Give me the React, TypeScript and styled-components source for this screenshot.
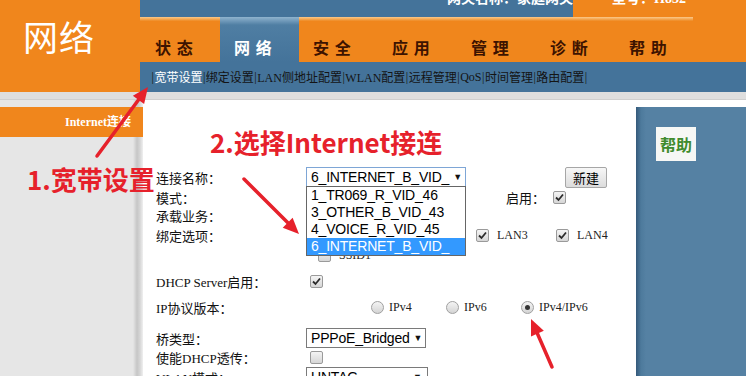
import React from 'react';
import styled, { createGlobalStyle } from 'styled-components';

const ORANGE = '#f0861c';
const BLUE = '#44739a';
const RED = '#e6212b';

const GlobalStyle = createGlobalStyle`
  html, body { margin: 0; padding: 0; }
  body {
    width: 746px;
    height: 376px;
    overflow: hidden;
    background: #fff;
    font-family: "Liberation Serif", "Noto Sans CJK SC", serif;
    font-size: 13px;
    color: #111;
  }
`;

const tabs = ['状 态', '网 络', '安 全', '应 用', '管 理', '诊 断', '帮 助'];
const subItems = ['宽带设置', '绑定设置', 'LAN侧地址配置', 'WLAN配置', '远程管理', 'QoS', '时间管理', '路由配置'];
const options = ['1_TR069_R_VID_46', '3_OTHER_B_VID_43', '4_VOICE_R_VID_45', '6_INTERNET_B_VID_'];

const Arrow = ({ x1, y1, x2, y2 }: { x1: number; y1: number; x2: number; y2: number }) => {
  const dx = x2 - x1;
  const dy = y2 - y1;
  const len = Math.hypot(dx, dy);
  const ux = dx / len;
  const uy = dy / len;
  const hl = 16;
  const hw = 7;
  const bx = x2 - ux * hl;
  const by = y2 - uy * hl;
  const pts = `${x2},${y2} ${bx - uy * hw},${by + ux * hw} ${bx + uy * hw},${by - ux * hw}`;
  return (
    <g>
      <line x1={x1} y1={y1} x2={bx + ux * 2} y2={by + uy * 2} stroke={RED} strokeWidth={3.5} strokeLinecap="round" />
      <polygon points={pts} fill={RED} />
    </g>
  );
};

const Check = ({ checked }: { checked?: boolean }) => (
  <CheckBox>
    {checked && (
      <svg width="9" height="9" viewBox="0 0 9 9">
        <path d="M1 4.5 L3.5 7 L8 1.5" fill="none" stroke="#2b2b2b" strokeWidth="1.8" />
      </svg>
    )}
  </CheckBox>
);

export default function App() {
  return (
    <Page>
      <GlobalStyle />
      <Header>
        <Logo>网络</Logo>
        <HeaderRight>
          <InfoBar>
            <InfoLeft>
              <InfoText>网关名称：家庭网关</InfoText>
            </InfoLeft>
            <InfoRight>
              <InfoText>型号：H832</InfoText>
            </InfoRight>
          </InfoBar>
          <Nav>
            {tabs.map((t, i) => (
              <Tab key={t} $active={i === 1}>
                {t}
              </Tab>
            ))}
          </Nav>
          <SubNav>
            <Sep>|</Sep>
            {subItems.map((s, i) => (
              <React.Fragment key={s}>
                <SubItem $active={i === 0}>{s}</SubItem>
                <Sep>|</Sep>
              </React.Fragment>
            ))}
          </SubNav>
        </HeaderRight>
      </Header>
      <Strip />
      <Main>
        <Sidebar>
          <SideItem>Internet连接</SideItem>
        </Sidebar>
        <Content>
          <Row $h={22}>
            <Label>连接名称：</Label>
            <SelectWrap $w={160} $focus>
              <SelectText>6_INTERNET_B_VID_</SelectText>
              <Caret>▼</Caret>
              <DropList>
                {options.map((o, i) => (
                  <DropItem key={o} $sel={i === 3}>
                    {o}
                  </DropItem>
                ))}
              </DropList>
            </SelectWrap>
            <Button>新建</Button>
          </Row>
          <Row $h={18}>
            <Label>模式：</Label>
            <Field $pl={200}>
              <InlineLabel>启用：</InlineLabel>
              <Check checked />
            </Field>
          </Row>
          <Row $h={18}>
            <Label>承载业务：</Label>
          </Row>
          <Row $h={22}>
            <Label>绑定选项：</Label>
            <Field $pl={10}>
              {['LAN1', 'LAN2', 'LAN3', 'LAN4'].map((l) => (
                <CheckItem key={l} $w={80}>
                  <Check checked />
                  <Small>{l}</Small>
                </CheckItem>
              ))}
            </Field>
          </Row>
          <Row $h={18}>
            <Label />
            <Field $pl={12}>
              <CheckItem $w={80}>
                <Check />
                <Small>SSID1</Small>
              </CheckItem>
            </Field>
          </Row>
          <Row $h={18} $mt={8}>
            <Label>DHCP Server启用：</Label>
            <Field $pl={4}>
              <Check checked />
            </Field>
          </Row>
          <Row $h={18} $mt={8}>
            <Label>IP协议版本：</Label>
            <Field $pl={65}>
              {['IPv4', 'IPv6', 'IPv4/IPv6'].map((r, i) => (
                <CheckItem key={r} $w={75} $gap={5}>
                  <Radio $on={i === 2} />
                  <Small>{r}</Small>
                </CheckItem>
              ))}
            </Field>
          </Row>
          <Row $h={20} $mt={12}>
            <Label>桥类型：</Label>
            <SelectWrap $w={120}>
              <SelectText>PPPoE_Bridged</SelectText>
              <Caret>▼</Caret>
            </SelectWrap>
          </Row>
          <Row $h={18}>
            <Label>使能DHCP透传：</Label>
            <Field $pl={4}>
              <Check />
            </Field>
          </Row>
          <Row $h={20} $mt={1}>
            <Label>VLAN模式：</Label>
            <SelectWrap $w={122}>
              <SelectText>UNTAG</SelectText>
              <Caret>▼</Caret>
            </SelectWrap>
          </Row>
        </Content>
        <Help>
          <HelpTitle>帮助</HelpTitle>
        </Help>
      </Main>
      <Overlay>
        <AnnoText $x={27} $y={161}>1.宽带设置</AnnoText>
        <AnnoText $x={210} $y={124}>2.选择Internet接连</AnnoText>
        <svg width="746" height="376" viewBox="0 0 746 376">
          <Arrow x1={97} y1={156} x2={148} y2={87} />
          <Arrow x1={244} y1={179} x2={299} y2={234} />
          <Arrow x1={552} y1={367} x2={531} y2={319} />
        </svg>
      </Overlay>
    </Page>
  );
}

const Page = styled.div`
  position: relative;
  width: 746px;
  height: 376px;
  overflow: hidden;
`;

const Header = styled.div`
  display: flex;
  height: 92px;
`;

const Logo = styled.div`
  width: 140px;
  background: ${ORANGE};
  color: #fff;
  font-family: "Noto Sans CJK SC", sans-serif;
  font-size: 35px;
  line-height: 1;
  padding: 18px 0 0 23px;
  box-sizing: border-box;
  letter-spacing: 1px;
`;

const HeaderRight = styled.div`
  flex: 1;
  display: flex;
  flex-direction: column;
`;

const InfoBar = styled.div`
  display: flex;
  height: 17px;
  overflow: hidden;
`;

const InfoLeft = styled.div`
  flex: 1;
  background: ${BLUE};
  text-align: right;
`;

const InfoRight = styled.div`
  width: 173px;
  background: ${ORANGE};
  padding-left: 39px;
  box-sizing: border-box;
`;

const InfoText = styled.span`
  position: relative;
  top: -9px;
  display: inline-block;
  color: #fff;
  font-family: "Liberation Serif", "Noto Sans CJK SC", serif;
  font-weight: 700;
  font-size: 14px;
  line-height: 14px;
`;

const Nav = styled.div`
  display: flex;
  height: 45px;
  padding-left: 1px;
  background: linear-gradient(#fbc98a, #ef8a22) 0 0 / 553px 4px no-repeat, ${ORANGE};
`;

const Tab = styled.div<{ $active?: boolean }>`
  width: 79px;
  box-sizing: border-box;
  padding: 0 0 7px 14px;
  display: flex;
  align-items: flex-end;
  font-family: "Noto Sans CJK SC", sans-serif;
  font-weight: 700;
  font-size: 16px;
  line-height: 1;
  letter-spacing: 1px;
  white-space: pre;
  color: ${(p) => (p.$active ? '#fff' : '#3d1300')};
  background: ${(p) => (p.$active ? `linear-gradient(#8fb3ce 0, #4f7ea3 8px, ${BLUE} 100%)` : 'transparent')};
`;

const SubNav = styled.div`
  height: 30px;
  background: ${BLUE};
  padding-left: 11px;
  display: flex;
  align-items: center;
  font-size: 12px;
  color: #141414;
  white-space: nowrap;
`;

const Sep = styled.span`
  padding: 0 0.5px;
`;

const SubItem = styled.span<{ $active?: boolean }>`
  color: ${(p) => (p.$active ? '#fff' : '#141414')};
`;

const Strip = styled.div`
  height: 8px;
  background: #dedede;
  border-bottom: 1px solid #cfcfcf;
  box-sizing: border-box;
`;

const Main = styled.div`
  display: flex;
  height: 276px;
`;

const Sidebar = styled.div`
  width: 143px;
  padding-top: 7px;
  box-sizing: border-box;
  background: linear-gradient(to right, #e6e6e6 133px, #c6c6c6 137px, #d6d6d6 140px, #f0f0f0 143px);
`;

const SideItem = styled.div`
  height: 30px;
  background: ${ORANGE};
  color: #fff;
  font-weight: 700;
  font-size: 12px;
  line-height: 30px;
  text-align: right;
  padding-right: 12px;
`;

const Content = styled.div`
  flex: 1;
  background: #fff;
  padding: 66px 0 0 13px;
  box-sizing: border-box;
  display: flex;
  flex-direction: column;
`;

const Row = styled.div<{ $h: number; $mt?: number }>`
  display: flex;
  align-items: center;
  height: ${(p) => p.$h}px;
  margin-top: ${(p) => p.$mt ?? 0}px;
  flex-shrink: 0;
`;

const Label = styled.div`
  width: 150px;
  flex-shrink: 0;
  font-size: 13px;
  white-space: nowrap;
`;

const Field = styled.div<{ $pl?: number }>`
  display: flex;
  align-items: center;
  padding-left: ${(p) => p.$pl ?? 0}px;
`;

const InlineLabel = styled.span`
  width: 47px;
  font-size: 13px;
`;

const CheckItem = styled.div<{ $w: number; $gap?: number }>`
  display: flex;
  align-items: center;
  gap: ${(p) => p.$gap ?? 8}px;
  width: ${(p) => p.$w}px;
`;

const Small = styled.span`
  font-size: 12px;
  color: #222;
`;

const CheckBox = styled.span`
  width: 13px;
  height: 13px;
  box-sizing: border-box;
  border: 1px solid #9a9a9a;
  border-radius: 2px;
  background: linear-gradient(#f4f4f4, #d6d6d6);
  display: inline-flex;
  align-items: center;
  justify-content: center;
  flex-shrink: 0;
`;

const Radio = styled.span<{ $on?: boolean }>`
  width: 13px;
  height: 13px;
  box-sizing: border-box;
  border: 1px solid #a0a0a0;
  border-radius: 50%;
  background: linear-gradient(#f4f4f4, #d4d4d4);
  display: inline-flex;
  align-items: center;
  justify-content: center;
  flex-shrink: 0;
  &::after {
    content: '';
    width: 5px;
    height: 5px;
    border-radius: 50%;
    background: ${(p) => (p.$on ? '#333' : 'transparent')};
  }
`;

const SelectWrap = styled.div<{ $w: number; $focus?: boolean }>`
  position: relative;
  width: ${(p) => p.$w}px;
  height: 20px;
  box-sizing: border-box;
  border: 1px solid ${(p) => (p.$focus ? '#7ea6d6' : '#7a7a7a')};
  background: #fff;
  display: flex;
  align-items: center;
  gap: 4px;
  padding: 0 5px 0 4px;
  font-family: "Liberation Sans", Arial, sans-serif;
  font-size: 14px;
  color: #000;
`;

const SelectText = styled.span`
  flex: 1;
  white-space: nowrap;
  letter-spacing: -0.2px;
`;

const Caret = styled.span`
  font-size: 9px;
  color: #111;
`;

const DropList = styled.div`
  position: absolute;
  top: 18px;
  left: -1px;
  width: 160px;
  box-sizing: border-box;
  border: 1px solid #666;
  background: #fff;
  z-index: 2;
`;

const DropItem = styled.div<{ $sel?: boolean }>`
  height: 17px;
  line-height: 17px;
  padding-left: 4px;
  font-family: "Liberation Sans", Arial, sans-serif;
  font-size: 14px;
  letter-spacing: -0.2px;
  color: ${(p) => (p.$sel ? '#fff' : '#000')};
  background: ${(p) => (p.$sel ? '#3399ff' : '#fff')};
  white-space: nowrap;
`;

const Button = styled.div`
  margin-left: 99px;
  width: 42px;
  height: 21px;
  box-sizing: border-box;
  border: 1px solid #a6a6a6;
  border-radius: 2px;
  background: linear-gradient(#f7f7f7, #dcdcdc);
  display: flex;
  align-items: center;
  justify-content: center;
  font-family: "Noto Sans CJK SC", sans-serif;
  font-size: 13px;
  color: #000;
`;

const Help = styled.div`
  width: 110px;
  margin-top: 7px;
  background: linear-gradient(to right, #34597a 0, #4d7a9c 5px, #5581a3 10px, #5581a3 100%);
  padding: 20px 0 0 20px;
  box-sizing: border-box;
`;

const HelpTitle = styled.div`
  width: 40px;
  height: 34px;
  background: #f6f7f5;
  color: #3f8b2e;
  font-family: "Noto Sans CJK SC", sans-serif;
  font-weight: 700;
  font-size: 16px;
  display: flex;
  align-items: center;
  justify-content: center;
`;

const Overlay = styled.div`
  position: absolute;
  inset: 0;
  pointer-events: none;
  svg {
    position: absolute;
    left: 0;
    top: 0;
  }
`;

const AnnoText = styled.div<{ $x: number; $y: number }>`
  position: absolute;
  left: ${(p) => p.$x}px;
  top: ${(p) => p.$y}px;
  color: ${RED};
  font-family: "Noto Sans CJK SC", sans-serif;
  font-weight: 700;
  font-size: 26px;
  line-height: 1.4;
  white-space: nowrap;
`;
